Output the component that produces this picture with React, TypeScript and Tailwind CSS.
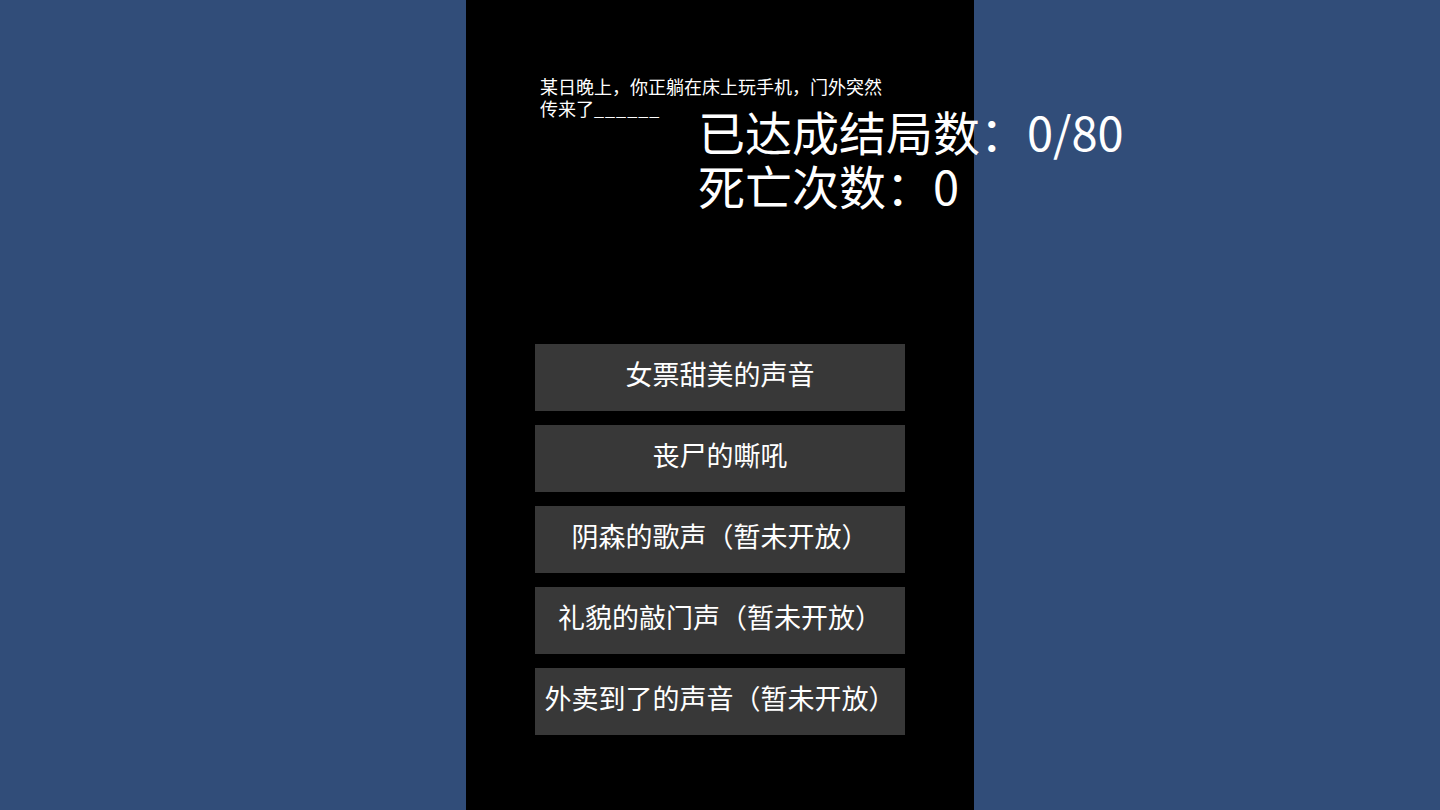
import React from "react";

const choices = [
  { id: 1, label: "女票甜美的声音" },
  { id: 2, label: "丧尸的嘶吼" },
  { id: 3, label: "阴森的歌声（暂未开放）" },
  { id: 4, label: "礼貌的敲门声（暂未开放）" },
  { id: 5, label: "外卖到了的声音（暂未开放）" },
];

const font = { fontFamily: '"Noto Sans CJK SC", "Noto Sans", sans-serif' };

const App = () => {
  return (
    <div className="w-full h-[810px] bg-[#314d79] flex justify-center overflow-hidden" style={font}>
      <div className="w-[508px] h-full bg-black flex flex-col text-white">
        <p className="ml-[74px] mt-[75px] w-[350px] text-[18px] leading-[22px]">
          某日晚上，你正躺在床上玩手机，门外突然传来了<span className="tracking-[1px]">______</span>
        </p>

        <div className="ml-[232px] mt-[-15px] w-[520px] text-[47px] leading-[54px] whitespace-nowrap">
          <p>已达成结局数：0/80</p>
          <p>死亡次数：0</p>
        </div>

        <section className="ml-[69px] mt-[132px] w-[370px] flex flex-col gap-[14px]">
          {choices.map((c) => (
            <button
              key={c.id}
              className="h-[67px] bg-[#383838] flex items-center justify-center pb-[7px] text-[27px] text-white whitespace-nowrap"
            >
              {c.label}
            </button>
          ))}
        </section>
      </div>
    </div>
  );
};

export default App;
